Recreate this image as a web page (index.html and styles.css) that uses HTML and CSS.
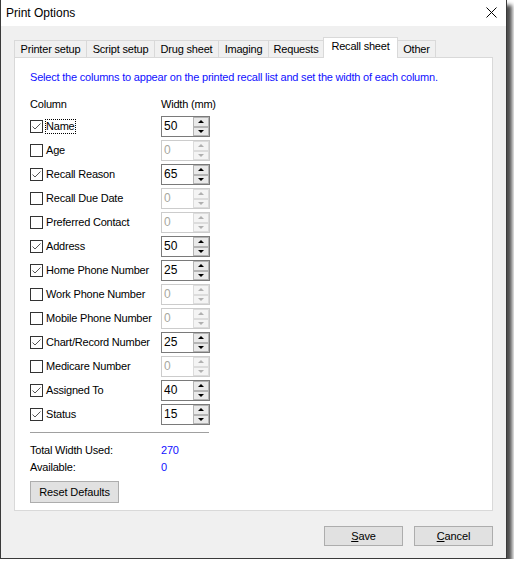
FILE: index.html
```html
<!DOCTYPE html>
<html>
<head>
<meta charset="utf-8">
<link rel="stylesheet" href="styles.css">
</head>
<body>
<div class="window">
  <div class="titlebar">
    <span class="title">Print Options</span>
    <svg class="close" width="11" height="11" viewBox="0 0 11 11"><path d="M0.5 0.5 L10.5 10.5 M10.5 0.5 L0.5 10.5" stroke="#000" stroke-width="1" fill="none"/></svg>
  </div>
  <div class="body">
    <div class="tabs">
      <div class="tab w1">Printer setup</div>
      <div class="tab w2">Script setup</div>
      <div class="tab w3">Drug sheet</div>
      <div class="tab w4">Imaging</div>
      <div class="tab w5">Requests</div>
      <div class="tab active w6">Recall sheet</div>
      <div class="tab w7">Other</div>
    </div>
    <div class="panel">
      <div class="intro">Select the columns to appear on the printed recall list and set the width of each column.</div>
      <div class="head"><span class="c1">Column</span><span>Width (mm)</span></div>
      <div class="rows">
        <div class="row"><label class="cb"><span class="box on"><svg width="11" height="11" viewBox="0 0 11 11"><path d="M1.5 5.5 L4 8 L9.5 2.5" stroke="#555" stroke-width="1" fill="none"/></svg></span><span class="lbl focus">Name</span></label><div class="spin"><span class="val">50</span><div class="btns"><span class="up"></span><span class="dn"></span></div></div></div>
        <div class="row"><label class="cb"><span class="box"></span><span class="lbl">Age</span></label><div class="spin off"><span class="val">0</span><div class="btns"><span class="up"></span><span class="dn"></span></div></div></div>
        <div class="row"><label class="cb"><span class="box on"><svg width="11" height="11" viewBox="0 0 11 11"><path d="M1.5 5.5 L4 8 L9.5 2.5" stroke="#555" stroke-width="1" fill="none"/></svg></span><span class="lbl">Recall Reason</span></label><div class="spin"><span class="val">65</span><div class="btns"><span class="up"></span><span class="dn"></span></div></div></div>
        <div class="row"><label class="cb"><span class="box"></span><span class="lbl">Recall Due Date</span></label><div class="spin off"><span class="val">0</span><div class="btns"><span class="up"></span><span class="dn"></span></div></div></div>
        <div class="row"><label class="cb"><span class="box"></span><span class="lbl">Preferred Contact</span></label><div class="spin off"><span class="val">0</span><div class="btns"><span class="up"></span><span class="dn"></span></div></div></div>
        <div class="row"><label class="cb"><span class="box on"><svg width="11" height="11" viewBox="0 0 11 11"><path d="M1.5 5.5 L4 8 L9.5 2.5" stroke="#555" stroke-width="1" fill="none"/></svg></span><span class="lbl">Address</span></label><div class="spin"><span class="val">50</span><div class="btns"><span class="up"></span><span class="dn"></span></div></div></div>
        <div class="row"><label class="cb"><span class="box on"><svg width="11" height="11" viewBox="0 0 11 11"><path d="M1.5 5.5 L4 8 L9.5 2.5" stroke="#555" stroke-width="1" fill="none"/></svg></span><span class="lbl">Home Phone Number</span></label><div class="spin"><span class="val">25</span><div class="btns"><span class="up"></span><span class="dn"></span></div></div></div>
        <div class="row"><label class="cb"><span class="box"></span><span class="lbl">Work Phone Number</span></label><div class="spin off"><span class="val">0</span><div class="btns"><span class="up"></span><span class="dn"></span></div></div></div>
        <div class="row"><label class="cb"><span class="box"></span><span class="lbl">Mobile Phone Number</span></label><div class="spin off"><span class="val">0</span><div class="btns"><span class="up"></span><span class="dn"></span></div></div></div>
        <div class="row"><label class="cb"><span class="box on"><svg width="11" height="11" viewBox="0 0 11 11"><path d="M1.5 5.5 L4 8 L9.5 2.5" stroke="#555" stroke-width="1" fill="none"/></svg></span><span class="lbl">Chart/Record Number</span></label><div class="spin"><span class="val">25</span><div class="btns"><span class="up"></span><span class="dn"></span></div></div></div>
        <div class="row"><label class="cb"><span class="box"></span><span class="lbl">Medicare Number</span></label><div class="spin off"><span class="val">0</span><div class="btns"><span class="up"></span><span class="dn"></span></div></div></div>
        <div class="row"><label class="cb"><span class="box on"><svg width="11" height="11" viewBox="0 0 11 11"><path d="M1.5 5.5 L4 8 L9.5 2.5" stroke="#555" stroke-width="1" fill="none"/></svg></span><span class="lbl">Assigned To</span></label><div class="spin"><span class="val">40</span><div class="btns"><span class="up"></span><span class="dn"></span></div></div></div>
        <div class="row"><label class="cb"><span class="box on"><svg width="11" height="11" viewBox="0 0 11 11"><path d="M1.5 5.5 L4 8 L9.5 2.5" stroke="#555" stroke-width="1" fill="none"/></svg></span><span class="lbl">Status</span></label><div class="spin"><span class="val">15</span><div class="btns"><span class="up"></span><span class="dn"></span></div></div></div>
      </div>
      <div class="sep"></div>
      <div class="stat"><span class="c1">Total Width Used:</span><span class="num">270</span></div>
      <div class="stat"><span class="c1">Available:</span><span class="num">0</span></div>
      <button class="btn reset">Reset Defaults</button>
    </div>
    <div class="actions">
      <button class="btn act"><u>S</u>ave</button>
      <button class="btn act"><u>C</u>ancel</button>
    </div>
  </div>
</div>
</body>
</html>
```
FILE: styles.css
```css
html, body {
  margin: 0;
  padding: 0;
  background: #ffffff;
}
body {
  font-family: "Liberation Sans", Arial, sans-serif;
  font-size: 11px;
  letter-spacing: -0.2px;
  color: #000;
}
.window {
  width: 507px;
  height: 559px;
  box-sizing: border-box;
  border: 1px solid #3a3a3a;
  border-top: none;
  background: #f0f0f0;
  box-shadow: 5px 5px 4px rgba(0, 0, 0, 0.7);
  display: flex;
  flex-direction: column;
}
.titlebar {
  height: 26px;
  flex: none;
  background: #fff;
  display: flex;
  align-items: center;
  justify-content: space-between;
  padding: 0 9px 0 5px;
}
.title {
  font-size: 12px;
  letter-spacing: 0;
  line-height: 14px;
  margin-top: -1px;
}
.close {
  display: block;
  margin-top: -1px;
}
.body {
  flex: 1;
  padding: 11px 13px 0 13px;
  display: flex;
  flex-direction: column;
}
.tabs {
  display: flex;
  align-items: flex-end;
  height: 20px;
}
.tab {
  box-sizing: border-box;
  height: 17px;
  border: 1px solid #d9d9d9;
  border-bottom: none;
  margin-right: -1px;
  background: #f0f0f0;
  text-align: center;
  line-height: 16px;
  white-space: nowrap;
}
.tab.active {
  height: 21px;
  margin-bottom: -1px;
  background: #fff;
  position: relative;
  z-index: 1;
  line-height: 17px;
}
.w1 { width: 73px; }
.w2 { width: 69px; }
.w3 { width: 65px; }
.w4 { width: 51px; }
.w5 { width: 56px; }
.w6 { width: 75px; }
.w7 { width: 39px; }
.panel {
  box-sizing: border-box;
  width: 479px;
  height: 454px;
  border: 1px solid #d9d9d9;
  background: #fff;
  padding: 12px 0 0 15px;
  display: flex;
  flex-direction: column;
  align-items: flex-start;
}
.intro {
  color: #1010ff;
  line-height: 14px;
  white-space: nowrap;
}
.head, .stat {
  display: flex;
  line-height: 14px;
}
.head {
  margin-top: 13px;
}
.c1 {
  width: 131px;
}
.rows {
  margin-top: 5px;
  display: flex;
  flex-direction: column;
  gap: 3px;
}
.row {
  display: flex;
  align-items: center;
  height: 21px;
}
.cb {
  width: 131px;
  display: flex;
  align-items: center;
}
.box {
  box-sizing: border-box;
  width: 13px;
  height: 13px;
  border: 1px solid #333;
  background: #fff;
  display: flex;
  align-items: center;
  justify-content: center;
}
.box svg { display: block; }
.lbl {
  line-height: 13px;
  border: 1px dotted transparent;
  margin-left: 2px;
  padding: 0;
}
.lbl.focus {
  border-color: #000;
}
.spin {
  box-sizing: border-box;
  width: 49px;
  height: 21px;
  border: 1px solid #7a7a7a;
  background: #fff;
  display: flex;
}
.val {
  flex: 1;
  font-size: 12px;
  letter-spacing: 0;
  line-height: 19px;
  padding-left: 2px;
  color: #000;
}
.btns {
  width: 16px;
  display: flex;
  flex-direction: column;
}
.up, .dn {
  box-sizing: border-box;
  flex: 1;
  border: 1px solid #b4b4b4;
  background: #e9e9e9;
  display: flex;
  align-items: center;
  justify-content: center;
}
.up::after, .dn::after {
  content: "";
  width: 0;
  height: 0;
  border-left: 3px solid transparent;
  border-right: 3px solid transparent;
}
.up::after { border-bottom: 3px solid #000; }
.dn::after { border-top: 3px solid #000; }
.spin.off {
  border-color: #cccccc;
}
.spin.off .val {
  color: #a8a8a0;
}
.spin.off .up, .spin.off .dn {
  border-color: #dcdcdc;
  background: #f4f4f4;
}
.spin.off .up::after { border-bottom-color: #b0b0b0; }
.spin.off .dn::after { border-top-color: #b0b0b0; }
.sep {
  width: 179px;
  height: 1px;
  background: #a0a0a0;
  margin-top: 7px;
}
.sep + .stat {
  margin-top: 10px;
}
.stat + .stat {
  margin-top: 3px;
}
.num {
  color: #1010ff;
}
.btn {
  font-family: "Liberation Sans", Arial, sans-serif;
  font-size: 11px;
  letter-spacing: -0.1px;
  color: #000;
  background: #e1e1e1;
  border: 1px solid #adadad;
  padding: 0;
  margin: 0;
  box-sizing: border-box;
}
.reset {
  margin-top: 7px;
  width: 89px;
  height: 22px;
}
.actions {
  display: flex;
  justify-content: flex-end;
  gap: 11px;
  margin-top: 15px;
  width: 479px;
}
.act {
  width: 79px;
  height: 20px;
}
```
